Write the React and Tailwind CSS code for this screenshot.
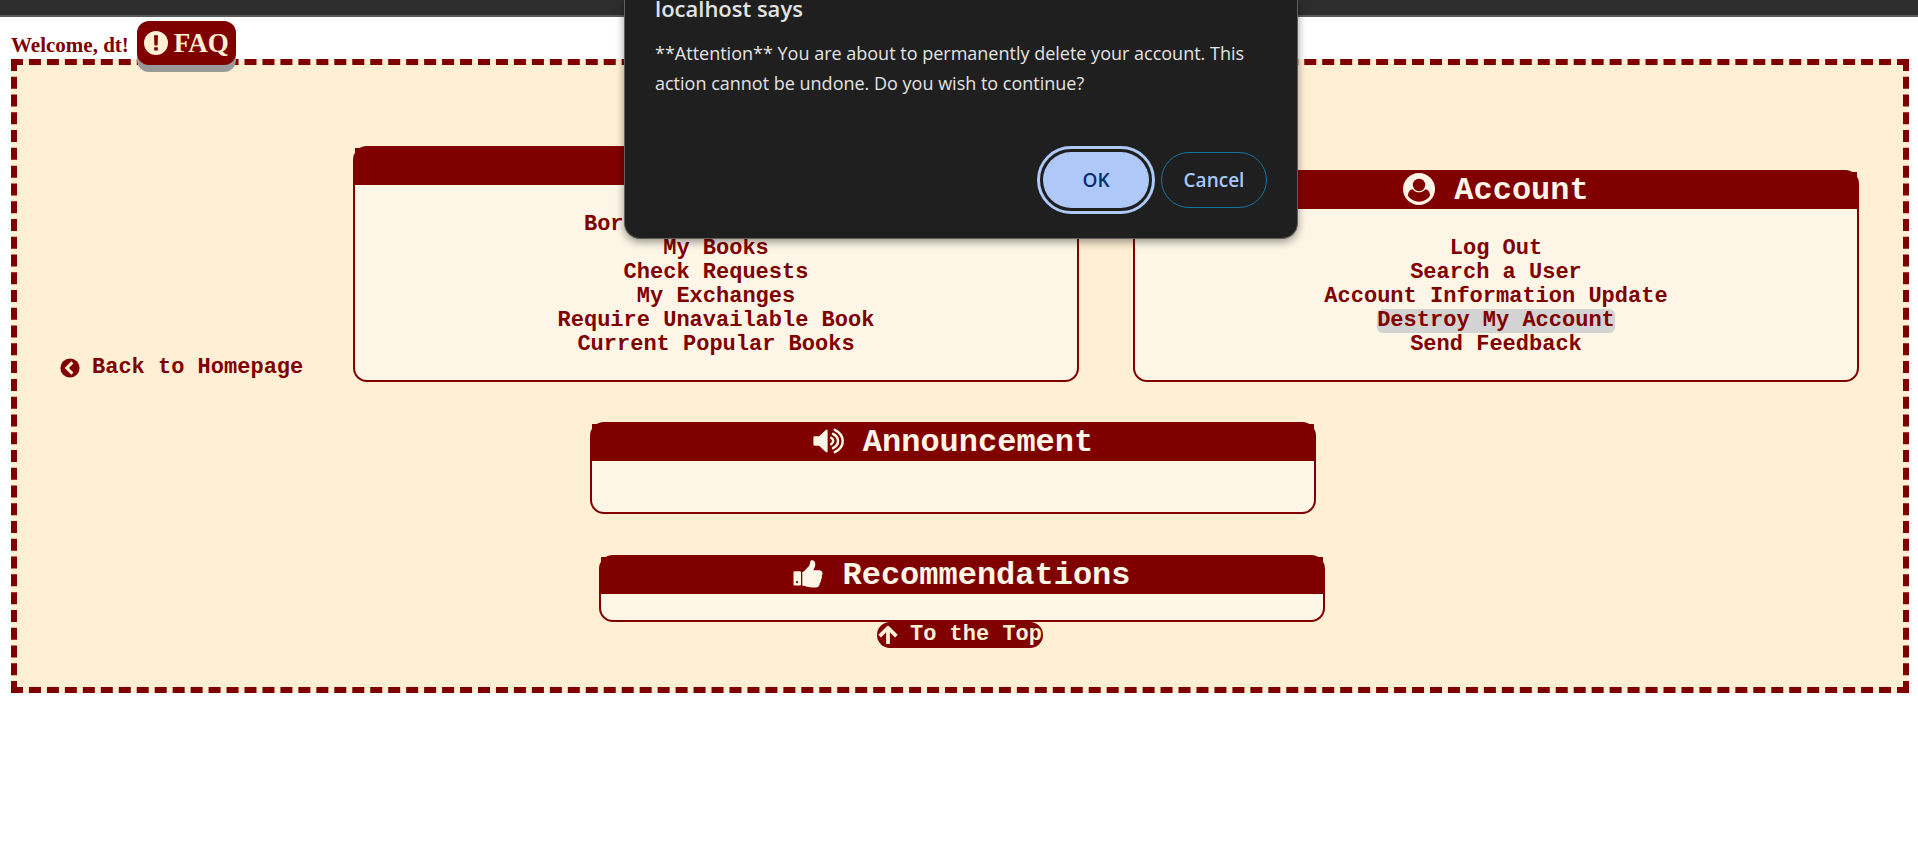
const bookLinks = [
  "Borrow or Lend Books",
  "My Books",
  "Check Requests",
  "My Exchanges",
  "Require Unavailable Book",
  "Current Popular Books",
];

const accountLinks = [
  "Log Out",
  "Search a User",
  "Account Information Update",
  "Destroy My Account",
  "Send Feedback",
];

function BookIcon() {
  return (
    <svg viewBox="0 0 28 28" className="-mt-1 size-7 shrink-0" fill="currentColor" aria-hidden="true">
      <path d="M7 1h17a2 2 0 0 1 2 2v17l-2 2v3h2v2H7a4 4 0 0 1-4-4V5a4 4 0 0 1 4-4Zm0 21a1.5 1.5 0 0 0 0 3h14v-3Z" />
    </svg>
  );
}

function UserCircleIcon() {
  return (
    <svg viewBox="0 0 32 32" className="-mt-1 size-8 shrink-0" aria-hidden="true">
      <circle cx="16" cy="16" r="16" fill="#fdf5e6" />
      <circle cx="16" cy="12" r="6.2" fill="#800000" />
      <path
        fill="#800000"
        d="M4.8 22.4C5.5 18.4 7 16.4 9.5 16.2A8.4 8.4 0 0 0 22.5 16.2C25 16.4 26.5 18.4 27.2 22.4A13 13 0 0 1 4.8 22.4Z"
      />
    </svg>
  );
}

function VolumeIcon() {
  return (
    <svg viewBox="0 0 31 26" className="-mt-1 h-[26px] w-[31px] shrink-0" aria-hidden="true">
      <path fill="currentColor" d="M1.5 8.3H6L12.8 2Q14.6.8 14.6 2.8V23.2Q14.6 25.2 12.8 24L6 17.7H1.5Q.4 17.7.4 16.6V9.4Q.4 8.3 1.5 8.3Z" />
      <g fill="none" stroke="currentColor" strokeWidth="2.5" strokeLinecap="round">
        <path d="M18.2 9.9C20.9 11.3 20.9 14.7 18.2 16.1" />
        <path d="M20 5.9C26.7 9.3 26.7 16.7 20 20.1" />
        <path d="M21.8 1.8C32.4 7.2 32.4 18.8 21.8 24.2" />
      </g>
    </svg>
  );
}

function ThumbsUpIcon() {
  return (
    <svg viewBox="0 0 30 28" className="-mt-1 h-7 w-[30px] shrink-0" fill="currentColor" aria-hidden="true">
      <path
        fillRule="evenodd"
        d="M1.6 11.3H7Q8 11.3 8 12.3V24.5Q8 25.5 7 25.5H1.6Q.5 25.5.5 24.5V12.3Q.5 11.3 1.6 11.3ZM4 21.1A1.1 1.1 0 1 0 4 23.3A1.1 1.1 0 1 0 4 21.1Z"
      />
      <path d="M9.3 12.2C11.6 11.6 13.6 8.4 15.6 6.6C16.8 5.4 16.8 3.6 17.3 1.6C17.6.5 18.2.2 19 .2C21.2.2 22.4 2 22.3 4.4C22.3 6.8 20.8 8.4 20.4 10.3H26.2C28.2 10.3 29.6 11.8 29.5 13.4C29.5 14.4 29.2 15.1 28.7 15.7C29.2 17.2 28.9 18.5 28 19.5C28.2 21 27.7 22.3 26.8 23.1C26.9 25.7 25.4 27.6 22.3 27.6H20C15.6 27.6 12.4 25.5 9.3 25.4Z" />
    </svg>
  );
}

function ExclamationIcon() {
  return (
    <svg viewBox="0 0 24 24" className="size-6 shrink-0" aria-hidden="true">
      <circle cx="12" cy="12" r="12" fill="#ffefd5" />
      <path fill="#800000" d="M10 4.2H14L13.6 14.4H10.4ZM10.2 16.2H13.8V19.6H10.2Z" />
    </svg>
  );
}

function BackIcon() {
  return (
    <svg viewBox="0 0 20 20" className="size-5 shrink-0" aria-hidden="true">
      <circle cx="10" cy="10" r="9.6" fill="#800000" />
      <path d="M12.4 4.4L6.8 10L12.4 15.6" fill="none" stroke="#ffefd5" strokeWidth="3" />
    </svg>
  );
}

function ArrowUpIcon() {
  return (
    <svg viewBox="0 0 20 20" className="size-5 shrink-0" fill="none" stroke="currentColor" strokeWidth="3.8" aria-hidden="true">
      <path d="M1.6 11.2L10 2.8L18.4 11.2M10 4V19" strokeLinejoin="round" />
    </svg>
  );
}

function Panel({ title, icon, className, children }) {
  return (
    <section className={`rounded-[14px] border-2 border-[#800000] bg-[#fdf5e6] ${className}`}>
      <h2 className="flex h-[37px] items-center justify-center gap-[19px] bg-[#800000] text-[32px] leading-9 text-[#fdf5e6]">
        {icon}
        {title}
      </h2>
      {children}
    </section>
  );
}

function LinkList({ links }) {
  return (
    <ul className="px-4 pt-7 pb-[23px] text-center text-[22px] leading-6 text-[#800000]">
      {links.map((label) => (
        <li key={label}>
          <a
            href="#"
            className={
              label === "Destroy My Account"
                ? "inline-block rounded-md bg-[lightgray] align-top"
                : "inline-block rounded-md align-top hover:bg-[lightgray]"
            }
          >
            {label}
          </a>
        </li>
      ))}
    </ul>
  );
}

function ConfirmDialog() {
  return (
    <div
      role="dialog"
      aria-labelledby="dialog-title"
      aria-describedby="dialog-text"
      className="absolute top-0 left-1/2 w-[674px] -translate-x-[335px] rounded-b-2xl border-x border-b border-[#5f5f5f] bg-[#1f1f1f] px-[30px] pb-[30px] font-['Open_Sans','Noto_Sans',sans-serif] font-normal text-[#e3e3e3] shadow-[0_3px_8px_rgba(0,0,0,0.4)]"
    >
      <h1 id="dialog-title" className="-mt-1.5 text-[22px] leading-7 font-semibold">
        localhost says
      </h1>
      <p id="dialog-text" className="mt-4 text-[18px] leading-[30px]">
        **Attention** You are about to permanently delete your account. This action cannot be undone. Do you wish to continue?
      </p>
      <div className="mt-[54px] flex justify-end gap-3 text-[19px] font-semibold">
        <button className="h-14 w-[106px] rounded-[28px] bg-[#aec9f8] text-[#062e6f] outline-3 outline-offset-3 outline-[#aec9f8]">
          OK
        </button>
        <button className="h-14 w-[106px] rounded-[28px] border border-[#12769f] text-[#a8c7fa]">
          Cancel
        </button>
      </div>
    </div>
  );
}

export default function App() {
  return (
    <div className="relative min-h-screen bg-white font-bold">
      <div className="h-[17px] border-b-2 border-[#5a5a5a] bg-[#2d2d2d]" />
      <header className="mx-[11px] flex h-[42px] items-start pt-1 font-['Liberation_Serif',serif] text-[#800000]">
        <span className="pt-[10px] text-[21px] leading-7">Welcome, dt!</span>
        <a
          href="#"
          className="relative z-10 ml-2 flex h-11 items-center gap-[6px] rounded-xl bg-[#800000] px-[7px] text-[27px] text-[#ffefd5] shadow-[0_7px_#999]"
        >
          <ExclamationIcon />
          FAQ
        </a>
      </header>
      <main className="mr-[9px] ml-[11px] border-6 border-dashed border-[#800000] bg-[#ffefd5] pt-[81px] pb-[39px] font-['Liberation_Mono',monospace]">
        <div className="flex items-end">
          <a href="#" className="flex w-[336px] shrink-0 items-center gap-3 pl-[43px] text-[22px] leading-7 whitespace-nowrap text-[#800000]">
            <BackIcon />
            Back to Homepage
          </a>
          <div className="flex flex-1 items-end gap-[54px] pr-11">
            <Panel title="Books" icon={<BookIcon />} className="flex-1">
              <LinkList links={bookLinks} />
            </Panel>
            <Panel title="Account" icon={<UserCircleIcon />} className="flex-1">
              <LinkList links={accountLinks} />
            </Panel>
          </div>
        </div>
        <div className="mt-10 flex justify-center pr-[14px]">
          <Panel title="Announcement" icon={<VolumeIcon />} className="w-[726px]">
            <div className="h-[51px]" />
          </Panel>
        </div>
        <div className="mt-[41px] flex justify-center pl-1">
          <Panel title="Recommendations" icon={<ThumbsUpIcon />} className="w-[726px]">
            <div className="h-[26px]" />
          </Panel>
        </div>
        <div className="flex justify-center">
          <a href="#" className="flex h-[26px] items-center gap-3 rounded-[14px] bg-[#800000] px-px text-[22px] leading-[26px] text-[#ffefd5]">
            <ArrowUpIcon />
            To the Top
          </a>
        </div>
      </main>
      <ConfirmDialog />
    </div>
  );
}
